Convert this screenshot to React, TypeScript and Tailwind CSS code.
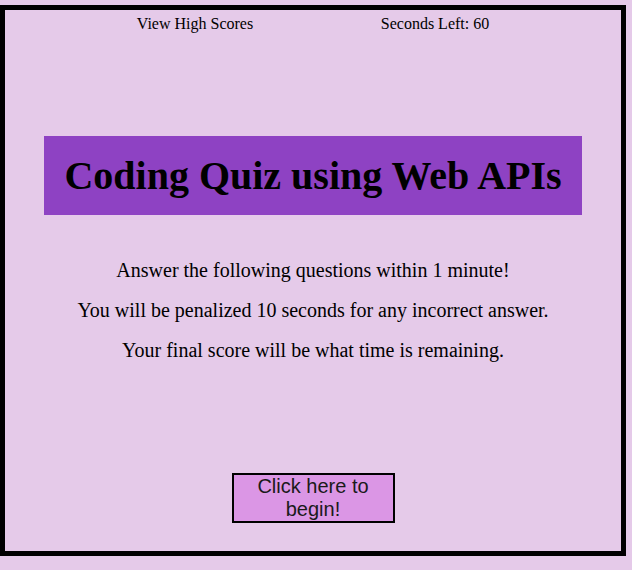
import React from 'react';

const serif = { fontFamily: '"Liberation Serif", "Times New Roman", serif' };

export default function App() {
  return (
    <div className="w-[632px] h-[570px] bg-[#e5cae9] pt-[5px]" style={serif}>
      <div className="w-[626px] h-[551px] border-[5px] border-black flex flex-col items-center text-black">
        {/* Top bar */}
        <header className="grid grid-cols-[240px_240px] text-[16px] leading-none mt-[6px] ml-[4px]">
          <span className="text-center">View High Scores</span>
          <span className="text-center">Seconds Left: 60</span>
        </header>

        {/* Title */}
        <div className="mt-[104px] w-[538px] h-[79px] bg-[#8e42c3] flex items-center justify-center">
          <h1 className="text-[40px] font-bold leading-none">Coding Quiz using Web APIs</h1>
        </div>

        {/* Instructions */}
        <div className="mt-[44px] flex flex-col items-center gap-[18px] text-[20px] leading-[22px]">
          <p>Answer the following questions within 1 minute!</p>
          <p>You will be penalized 10 seconds for any incorrect answer.</p>
          <p>Your final score will be what time is remaining.</p>
        </div>

        <button
          className="mt-[112px] w-[163px] h-[50px] border-2 border-black bg-[#db96e5] text-[20px] leading-[23px] text-[#1a1a1a]"
          style={{ fontFamily: '"Liberation Sans", Arial, sans-serif' }}
        >
          Click here to
          <br />
          begin!
        </button>
      </div>
    </div>
  );
}
